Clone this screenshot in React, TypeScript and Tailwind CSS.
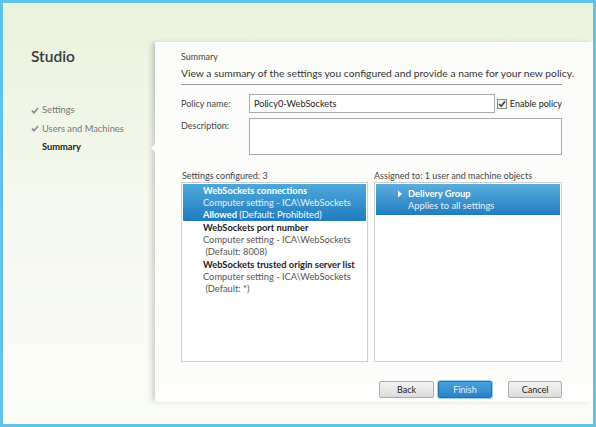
import React from "react";

const font = { fontFamily: 'Lato, "Open Sans", Arial, sans-serif' };

function Check() {
  return (
    <svg width="8" height="7" viewBox="0 0 9 8" className="shrink-0">
      <path d="M1 4.2 L3.4 6.5 L8 1.2" fill="none" stroke="#8a8a8a" strokeWidth="1.9" />
    </svg>
  );
}

export default function App() {
  return (
    <div
      className="w-[596px] h-[427px] overflow-hidden border-[3px] border-[#62c3ea] bg-gradient-to-b from-[#e9f2db] via-[#f6f9f0] to-[#fafcf6] text-[#333]"
      style={font}
    >
      <div className="flex h-full">
        {/* Sidebar */}
        <div className="w-[152px] shrink-0 pl-[28px] pt-[44px] relative">
          <div className="text-[15.5px] font-semibold text-[#3a3a3a] leading-[18px]">Studio</div>
          <div className="mt-[39px] flex flex-col gap-[6.5px] text-[9.3px] leading-[12px]">
            <div className="flex items-center gap-[3px] text-[#777]">
              <Check />
              <span>Settings</span>
            </div>
            <div className="flex items-center gap-[3px] text-[#777]">
              <Check />
              <span>Users and Machines</span>
            </div>
            <div className="pl-[11px] font-bold text-[#222]">Summary</div>
          </div>
        </div>

        {/* Main panel */}
        <div className="relative mt-[39px] mb-[22px] w-[438px] bg-gradient-to-b from-[#fcfdfb] to-[#fdfdfc] shadow-[-4px_0_5px_-1px_rgba(0,0,0,0.18)] pl-[26px] pr-[31px] pt-[9px] text-[9px]">
          {/* notch */}
          <div className="absolute left-[-4px] top-[101px] w-0 h-0 border-y-[5px] border-y-transparent border-r-[5px] border-r-[#fcfdfb]" />
          <div className="text-[9px] text-[#444] leading-[12px]">Summary</div>
          <div className="mt-[4px] text-[10.3px] text-[#333] leading-[13px] pb-[4px] border-b border-[#9a9a9a] whitespace-nowrap">
            View a summary of the settings you configured and provide a name for your new policy.
          </div>

          <div className="mt-[9px] flex items-center">
            <div className="w-[68px] text-[#444]">Policy name:</div>
            <div className="w-[246px] h-[19px] border border-[#a9a9a9] bg-white px-[4px] flex items-center text-[#222] text-[9.2px]">
              Policy0-WebSockets
            </div>
            <div className="ml-[2px] flex items-center gap-[3px]">
              <div className="w-[10px] h-[10px] border border-[#888] bg-[#f0f0f0] flex items-center justify-center">
                <svg width="8" height="8" viewBox="0 0 8 8">
                  <path d="M1 4 L3.2 6.2 L7 1.5" fill="none" stroke="#333" strokeWidth="1.5" />
                </svg>
              </div>
              <span className="text-[#222] whitespace-nowrap">Enable policy</span>
            </div>
          </div>

          <div className="mt-[5px] flex">
            <div className="w-[68px] text-[#444] pt-[1px]">Description:</div>
            <div className="w-[313px] h-[37px] border border-[#a9a9a9] bg-white" />
          </div>

          <div className="mt-[15px] flex gap-[6px]">
            <div className="w-[187px]">
              <div className="text-[#444] leading-[11px] mb-[1px] pl-[1px]">Settings configured: 3</div>
              <div className="h-[180px] border border-[#cfcfcf] bg-white p-[1px] leading-[12px] text-[9.3px]">
                <div className="bg-gradient-to-b from-[#4ea8db] to-[#1f7cbf] text-white pl-[20px] pt-[1px] pb-[1px] h-[37px]">
                  <div className="font-bold">WebSockets connections</div>
                  <div className="text-[#e3f1fb] whitespace-nowrap">Computer setting - ICA\WebSockets</div>
                  <div><span className="font-bold">Allowed</span> (Default: Prohibited)</div>
                </div>
                <div className="pl-[20px] pt-[1px] h-[37px]">
                  <div className="font-bold text-[#222]">WebSockets port number</div>
                  <div className="text-[#555] whitespace-nowrap">Computer setting - ICA\WebSockets</div>
                  <div className="text-[#555]">&nbsp;(Default: 8008)</div>
                </div>
                <div className="pl-[20px] pt-[1px]">
                  <div className="font-bold text-[#222] whitespace-nowrap">WebSockets trusted origin server list</div>
                  <div className="text-[#555] whitespace-nowrap">Computer setting - ICA\WebSockets</div>
                  <div className="text-[#555]">&nbsp;(Default: *)</div>
                </div>
              </div>
            </div>
            <div className="w-[188px]">
              <div className="text-[#444] leading-[11px] mb-[1px] whitespace-nowrap">Assigned to: 1 user and machine objects</div>
              <div className="h-[180px] border border-[#cfcfcf] bg-white p-[1px] leading-[12px] text-[9.3px]">
                <div className="bg-gradient-to-b from-[#5aaedd] to-[#1f7cbf] text-white pl-[21px] pt-[4px] pb-[3px] flex h-[31px]">
                  <svg width="6" height="8" viewBox="0 0 6 8" className="mt-[2px] mr-[5px]">
                    <path d="M1 0.5 L5 4 L1 7.5 Z" fill="white" />
                  </svg>
                  <div>
                    <div className="font-bold">Delivery Group</div>
                    <div className="text-[#e8f4fc]">Applies to all settings</div>
                  </div>
                </div>
              </div>
            </div>
          </div>

          <div className="mt-[19px] flex justify-end">
            <button className="w-[55px] h-[17px] rounded-[2px] border border-[#acacac] bg-gradient-to-b from-[#f3f3f3] to-[#dcdcdc] text-[#222] text-[9px]">Back</button>
            <button className="ml-[4px] w-[54px] h-[17px] rounded-[2px] border border-[#2a6ea3] bg-gradient-to-b from-[#4aa0dc] to-[#2b82c4] text-[#e8f4fc] text-[9px] shadow-[0_0_0_1px_#9fd0f0]">Finish</button>
            <button className="ml-[16px] w-[54px] h-[17px] rounded-[2px] border border-[#acacac] bg-gradient-to-b from-[#f3f3f3] to-[#dcdcdc] text-[#222] text-[9px]">Cancel</button>
          </div>
        </div>
      </div>
    </div>
  );
}
